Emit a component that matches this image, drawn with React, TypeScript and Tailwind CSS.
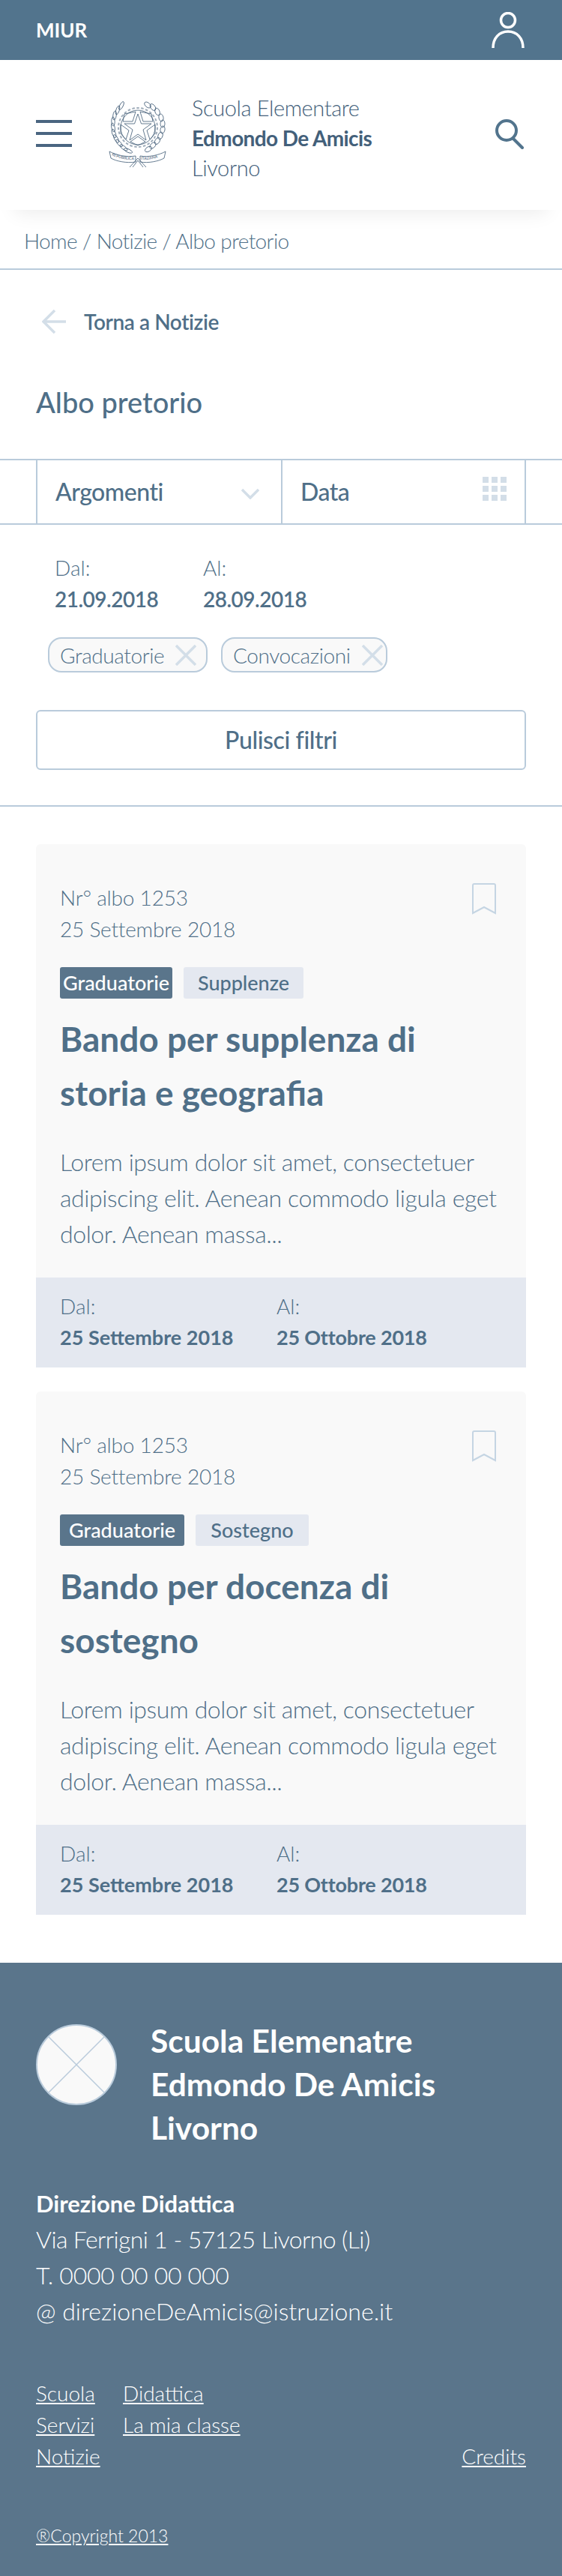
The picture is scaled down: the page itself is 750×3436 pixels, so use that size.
const leftLeaves = [
  [19, 7, 28], [14, 13, 18], [10, 20, 8], [8, 28, -2], [8, 36, -11], [9, 44, -20], [12, 51, -30], [16, 57, -42], [22, 63, -54], [28, 67, -66],
];
const rightLeaves = [
  [54, 6, -50], [61, 9, -36], [67, 15, -22], [72, 23, -10], [74, 31, 0], [74, 39, 10], [71, 47, 20], [67, 54, 32], [61, 60, 44], [55, 65, 58],
];

function Emblem() {
  return (
    <svg width="81" height="90" viewBox="0 0 81 90" fill="none" stroke="#3f5a75" strokeWidth="0.8">
      <circle cx="41" cy="36" r="26" strokeDasharray="3.5 2.5" strokeWidth="2" opacity="0.5" />
      <circle cx="41" cy="36" r="23" />
      <path d="M41 18 L45.5 31 L59 31 L48 39 L52 53 L41 45 L30 53 L34 39 L23 31 L36.5 31 Z" fill="#fff" />
      <path d="M38 15 L34 28 L21 28 L23 18 Z M44 15 L48 28 L61 28 L59 18 Z M18 32 L29 40 L25 52 L18 44 Z M64 32 L53 40 L57 52 L64 44 Z M31 55 L41 48 L51 55 L41 60 Z" />
      {leftLeaves.map(([x, y, r]) => (
        <ellipse key={`l${y}`} cx={x} cy={y} rx="2.2" ry="6" transform={`rotate(${r} ${x} ${y})`} />
      ))}
      {rightLeaves.map(([x, y, r]) => (
        <ellipse key={`r${y}`} cx={x} cy={y} rx="3" ry="5" transform={`rotate(${r} ${x} ${y})`} />
      ))}
      <path d="M3 68 C12 73 26 76 38 74 L38 82 C26 84 12 81 5 77 Z" fill="#fff" />
      <path d="M78 68 C69 73 55 76 44 74 L44 82 C55 84 69 81 76 77 Z" fill="#fff" />
      <path d="M30 89 L41 77 L52 89 M34 89 L41 80 L48 89" />
      <path id="textL" d="M6 73 C14 77 26 80 38 79" stroke="none" />
      <path id="textR" d="M45 79 C56 80 67 77 75 73" stroke="none" />
      <text fontSize="5.2" fill="#3f5a75" stroke="none"><textPath href="#textL">REPUBBLICA</textPath></text>
      <text fontSize="5.2" fill="#3f5a75" stroke="none"><textPath href="#textR">ITALIANA</textPath></text>
    </svg>
  );
}

function Bookmark() {
  return (
    <svg width="32" height="42" viewBox="0 0 32 42" fill="none" stroke="#c5d5e3" strokeWidth="2">
      <path d="M1 40 V3 Q1 1 3 1 H29 Q31 1 31 3 V40 L16 32 Z" />
    </svg>
  );
}

function Chip({ label, className }: { label: string; className: string }) {
  return (
    <div className={`h-[47px] rounded-[18px] border-2 border-[#b9cbdb] bg-[#f9f9f9] flex items-center gap-[15px] pl-[14px] ${className}`}>
      <span className="text-[28px] font-light tracking-[-0.4px] text-[#4f6f88]">{label}</span>
      <svg width="28" height="28" viewBox="0 0 28 28" stroke="#d3dee8" strokeWidth="3.5" fill="none">
        <path d="M1 1 L27 27 M27 1 L1 27" />
      </svg>
    </div>
  );
}

function Card({ tag, title, firstTagWidth, secondTagWidth }: { tag: string; title: string[]; firstTagWidth: string; secondTagWidth: string }) {
  return (
    <div className="bg-[#f9f9f9] rounded-t-[6px] mx-12 text-[#4f6f88]">
      <div className="px-8 pt-[50px] pb-[34px]">
        <div className="flex justify-between items-start pr-2">
          <div className="text-[28px] leading-[42px] font-light tracking-[-0.2px]">
            <p>Nr° albo 1253</p>
            <p>25 Settembre 2018</p>
          </div>
          <div className="mt-[2px]">
            <Bookmark />
          </div>
        </div>
        <div className="flex gap-[15px] mt-[30px]">
          <span className={`h-[42px] rounded-[3px] bg-[#5a758b] text-white text-[27px] font-medium flex items-center justify-center ${firstTagWidth}`}>Graduatorie</span>
          <span className={`h-[42px] rounded-[3px] bg-[#e4e8f0] text-[27px] font-medium flex items-center justify-center ${secondTagWidth}`}>{tag}</span>
        </div>
        <h3 className="text-[46px] leading-[72px] font-bold mt-[18px]">
          {title.map((l) => (
            <span key={l} className="block">{l}</span>
          ))}
        </h3>
        <p className="text-[32px] leading-[48px] font-light mt-[32px] whitespace-nowrap tracking-[-0.4px]">
          Lorem ipsum dolor sit amet, consectetuer<br />
          adipiscing elit. Aenean commodo ligula eget<br />
          dolor. Aenean massa...
        </p>
      </div>
      <div className="bg-[#e4e8f0] h-[120px] px-8 pt-[17px] flex">
        <div className="w-[289px]">
          <p className="text-[28px] leading-[42px] font-light">Dal:</p>
          <p className="text-[27px] leading-[42px] font-bold">25 Settembre 2018</p>
        </div>
        <div>
          <p className="text-[28px] leading-[42px] font-light">Al:</p>
          <p className="text-[27px] leading-[42px] font-bold tracking-[-0.2px]">25 Ottobre 2018</p>
        </div>
      </div>
    </div>
  );
}

export default function App() {
  return (
    <div className="w-[750px] bg-white font-['Lato','Liberation_Sans',sans-serif]">
      <div className="h-20 bg-[#52748d] flex items-center justify-between pl-12 pr-[50px]">
        <span className="text-[26px] font-bold text-white">MIUR</span>
        <svg width="44" height="48" viewBox="0 0 44 48" fill="none" stroke="#fff" strokeWidth="3.5">
          <circle cx="22" cy="11" r="9.5" />
          <path d="M2 48 C2 35 10 26 22 26 C34 26 42 35 42 48" />
        </svg>
      </div>

      <div className="relative h-[200px] bg-white flex items-center pl-12 pr-[50px] shadow-[0_24px_24px_-20px_rgba(0,0,0,0.08)]">
        <div className="flex flex-col gap-3 w-12 -mt-1">
          <div className="h-1 bg-[#4a6580]" />
          <div className="h-1 bg-[#4a6580]" />
          <div className="h-1 bg-[#4a6580]" />
        </div>
        <div className="ml-[47px] -mt-[2px]">
          <Emblem />
        </div>
        <div className="ml-[32px] pt-2 text-[29px] leading-10 text-[#43607a] tracking-[-0.4px] font-light">
          <p>Scuola Elementare</p>
          <p className="font-bold text-[28px] tracking-[-0.6px]">Edmondo De Amicis</p>
          <p>Livorno</p>
        </div>
        <svg className="ml-auto -mt-[2px]" width="40" height="40" viewBox="0 0 40 40" fill="none" stroke="#52748d" strokeWidth="4" strokeLinecap="round">
          <circle cx="16" cy="15" r="13" />
          <path d="M25 26 L37 38" />
        </svg>
      </div>

      <div className="h-[80px] pl-8 pt-[21px] border-b-2 border-[#b9cbdb] text-[28px] leading-10 font-light text-[#4f6f88] tracking-[-0.6px]">
        Home / Notizie / Albo pretorio
      </div>

      <div className="flex items-center pl-[56px] mt-[49px] h-10">
        <svg width="32" height="32" viewBox="0 0 32 32" fill="none" stroke="#d3dee8" strokeWidth="3.5">
          <path d="M32 16 H3 M17 1 L2 16 L17 31" />
        </svg>
        <span className="ml-6 text-[28px] font-semibold text-[#4f6f88] tracking-[-0.4px]">Torna a Notizie</span>
      </div>

      <h1 className="ml-12 mt-[57px] h-[60px] text-[38px] leading-[60px] font-medium text-[#4f6f88]">Albo pretorio</h1>

      <div className="mt-[46px] h-[88px] border-y-2 border-[#b9cbdb] px-12 flex text-[#4f6f88] text-[32px] font-medium tracking-[-0.5px]">
        <div className="w-[327px] border-l-2 border-[#b9cbdb] flex items-center justify-between pl-6 pr-[29px]">
          <span>Argomenti</span>
          <svg width="24" height="14" viewBox="0 0 24 14" fill="none" stroke="#d3dee8" strokeWidth="3.5" className="mt-[6px]">
            <path d="M1 1 L12 12 L23 1" />
          </svg>
        </div>
        <div className="flex-1 border-x-2 border-[#b9cbdb] flex items-center justify-between pl-6 pr-[24px]">
          <span>Data</span>
          <div className="grid grid-cols-3 gap-1 -mt-[8px]">
            {[0, 1, 2, 3, 4, 5, 6, 7, 8].map((i) => (
              <div key={i} className="w-2 h-2 bg-[#d3dee8]" />
            ))}
          </div>
        </div>
      </div>

      <div className="flex pl-[73px] mt-9 text-[#4f6f88]">
        <div className="w-[198px]">
          <p className="text-[28px] leading-[42px] font-light">Dal:</p>
          <p className="text-[28px] leading-[42px] font-semibold tracking-[-0.5px]">21.09.2018</p>
        </div>
        <div>
          <p className="text-[28px] leading-[42px] font-light">Al:</p>
          <p className="text-[28px] leading-[42px] font-semibold tracking-[-0.5px]">28.09.2018</p>
        </div>
      </div>

      <div className="flex ml-[64px] gap-[18px] mt-[30px]">
        <Chip label="Graduatorie" className="w-[213px]" />
        <Chip label="Convocazioni" className="w-[222px]" />
      </div>

      <button className="block mt-[50px] mx-12 w-[654px] h-[80px] rounded-[6px] border-2 border-[#b9cbdb] text-[32px] font-medium text-[#4f6f88] tracking-[-0.4px]">
        Pulisci filtri
      </button>

      <div className="mt-[47px] border-t-2 border-[#b9cbdb]" />

      <div className="mt-[50px] flex flex-col gap-8">
        <Card tag="Supplenze" title={["Bando per supplenza di", "storia e geografia"]} firstTagWidth="w-[150px]" secondTagWidth="w-[160px]" />
        <Card tag="Sostegno" title={["Bando per docenza di", "sostegno"]} firstTagWidth="w-[166px]" secondTagWidth="w-[151px]" />
      </div>

      <footer className="mt-[64px] bg-[#5a758b] text-white h-[818px] px-12 pt-[82px]">
        <div className="flex items-start">
          <svg width="108" height="108" viewBox="0 0 108 108" className="shrink-0">
            <circle cx="54" cy="54" r="53" fill="#f9f9f9" stroke="#b9cbdb" strokeWidth="2" />
            <path d="M17 17 L91 91 M91 17 L17 91" stroke="#b9cbdb" strokeWidth="1.5" />
          </svg>
          <h2 className="ml-[45px] -mt-[7px] text-[42.5px] leading-[58px] font-bold">
            Scuola Elemenatre<br />Edmondo De Amicis<br />Livorno
          </h2>
        </div>
        <div className="mt-12 text-[32px] leading-[48px] font-light">
          <p className="font-bold text-[31px]">Direzione Didattica</p>
          <p className="tracking-[-0.6px]">Via Ferrigni 1 - 57125 Livorno (Li)</p>
          <p className="tracking-[-0.3px]">T. 0000 00 00 000</p>
          <p>@ direzioneDeAmicis@istruzione.it</p>
        </div>
        <div className="mt-[64px] text-[28px] leading-[42px] font-light flex justify-between items-end">
          <div className="flex">
            <div className="w-[116px] flex flex-col items-start">
              <a className="underline">Scuola</a>
              <a className="underline">Servizi</a>
              <a className="underline">Notizie</a>
            </div>
            <div className="flex flex-col items-start">
              <a className="underline">Didattica</a>
              <a className="underline">La mia classe</a>
            </div>
          </div>
          <a className="underline">Credits</a>
        </div>
        <p className="mt-[70px] text-[23px] leading-[30px] font-light underline">®Copyright 2013</p>
      </footer>
    </div>
  );
}
